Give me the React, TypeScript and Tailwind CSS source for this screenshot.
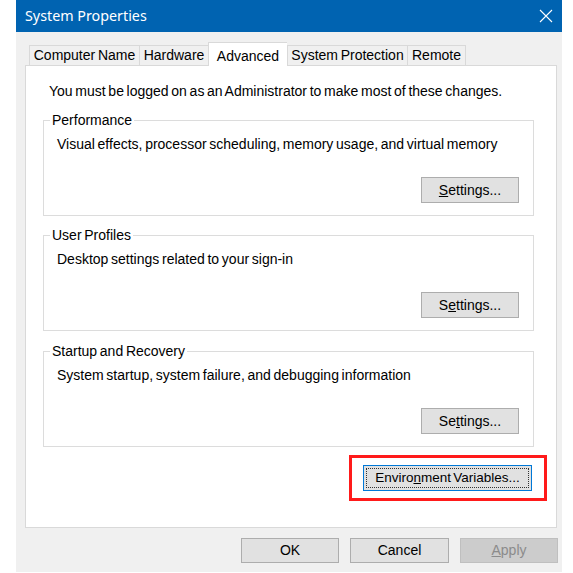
import React from "react";

function Btn({
  children,
  w = "w-[98px]",
  h = "h-[26px]",
  disabled = false,
}: {
  children: React.ReactNode;
  w?: string;
  h?: string;
  disabled?: boolean;
}) {
  return (
    <button
      className={
        disabled
          ? `${w} ${h} flex items-center justify-center border border-[#bfbfbf] bg-[#cccccc] text-[#8b8b8b]`
          : `${w} ${h} flex items-center justify-center border border-[#adadad] bg-[#e1e1e1] text-black`
      }
    >
      {children}
    </button>
  );
}

function Group({
  title,
  desc,
  btn,
  mt,
}: {
  title: string;
  desc: string;
  btn: React.ReactNode;
  mt: string;
}) {
  return (
    <fieldset className={`${mt} ml-[17px] w-[491px] border border-[#dcdcdc] pb-[12px]`}>
      <legend className="ml-[6px] px-[2px] leading-[16px]">{title}</legend>
      <div className="mt-[8px] pl-[13px] leading-[16px]">{desc}</div>
      <div className="mt-[25px] flex justify-end pr-[14px]">
        <Btn>{btn}</Btn>
      </div>
    </fieldset>
  );
}

export default function App() {
  const tabs = [
    { label: "Computer Name", w: "w-[110px]" },
    { label: "Hardware", w: "w-[69px]" },
    { label: "Advanced", w: "w-[79px]", selected: true },
    { label: "System Protection", w: "w-[120px]" },
    { label: "Remote", w: "w-[59px]", last: true },
  ];
  return (
    <div className="min-h-[573px] bg-white font-['Liberation_Sans',Arial,sans-serif] text-[14px] text-black [word-spacing:-1.2px]">
      <div className="ml-[16px] flex h-[572px] w-[546px] flex-col bg-[#f0f0f0]">
        {/* Title bar */}
        <div className="flex h-[32px] items-center justify-between bg-[#0063b1] pl-[9px] pr-[8px] text-white">
          <span className="font-['Noto_Sans',sans-serif] text-[14.3px] [word-spacing:0px]">
            System Properties
          </span>
          <svg width="14" height="14" viewBox="0 0 14 14" className="mr-[1px]">
            <path d="M1 1 L13 13 M13 1 L1 13" stroke="white" strokeWidth="1.1" fill="none" />
          </svg>
        </div>

        {/* Tabs */}
        <div className="ml-[13px] flex items-end pt-[10px]">
          {tabs.map((t) => (
            <div
              key={t.label}
              className={
                t.selected
                  ? `${t.w} relative z-10 -mb-px flex h-[24px] items-start justify-center border-l border-t border-[#d9d9d9] bg-white pt-[3px]`
                  : `${t.w} flex h-[20px] items-center justify-center border-l border-t border-[#d9d9d9] bg-[#f0f0f0] ${t.last ? "border-r" : ""}`
              }
            >
              {t.label}
            </div>
          ))}
        </div>

        {/* Panel */}
        <div className="ml-[9px] flex h-[463px] w-[532px] flex-col border border-[#d9d9d9] bg-white">
          <div className="mt-[17px] pl-[23px] leading-[16px]">
            You must be logged on as an Administrator to make most of these changes.
          </div>
          <Group
            mt="mt-[13px]"
            title="Performance"
            desc="Visual effects, processor scheduling, memory usage, and virtual memory"
            btn={
              <span>
                <u>S</u>ettings...
              </span>
            }
          />
          <Group
            mt="mt-[11px]"
            title="User Profiles"
            desc="Desktop settings related to your sign-in"
            btn={
              <span>
                S<u>e</u>ttings...
              </span>
            }
          />
          <Group
            mt="mt-[12px]"
            title="Startup and Recovery"
            desc="System startup, system failure, and debugging information"
            btn={
              <span>
                Se<u>t</u>tings...
              </span>
            }
          />
          <div className="mt-[8px] flex justify-end pr-[9px]">
            <div className="border-[3px] border-[#ff1a1a] pb-[7px] pl-[11px] pr-[12px] pt-[7px]">
              <button className="flex h-[26px] w-[169px] border border-[#0078d7] bg-[#e1e1e1] p-[2px]">
                <span className="flex flex-1 items-center justify-center border border-dotted border-[#333] text-[13.5px] [word-spacing:-1.5px]">
                  Enviro<u>n</u>ment Variables...
                </span>
              </button>
            </div>
          </div>
        </div>

        {/* Bottom buttons */}
        <div className="mr-[4px] mt-[10px] flex justify-end gap-[11px]">
          <Btn h="h-[25px]">OK</Btn>
          <Btn h="h-[25px]" w="w-[99px]">
            Cancel
          </Btn>
          <Btn h="h-[25px]" disabled>
            <span>
              <u>A</u>pply
            </span>
          </Btn>
        </div>
      </div>
    </div>
  );
}
